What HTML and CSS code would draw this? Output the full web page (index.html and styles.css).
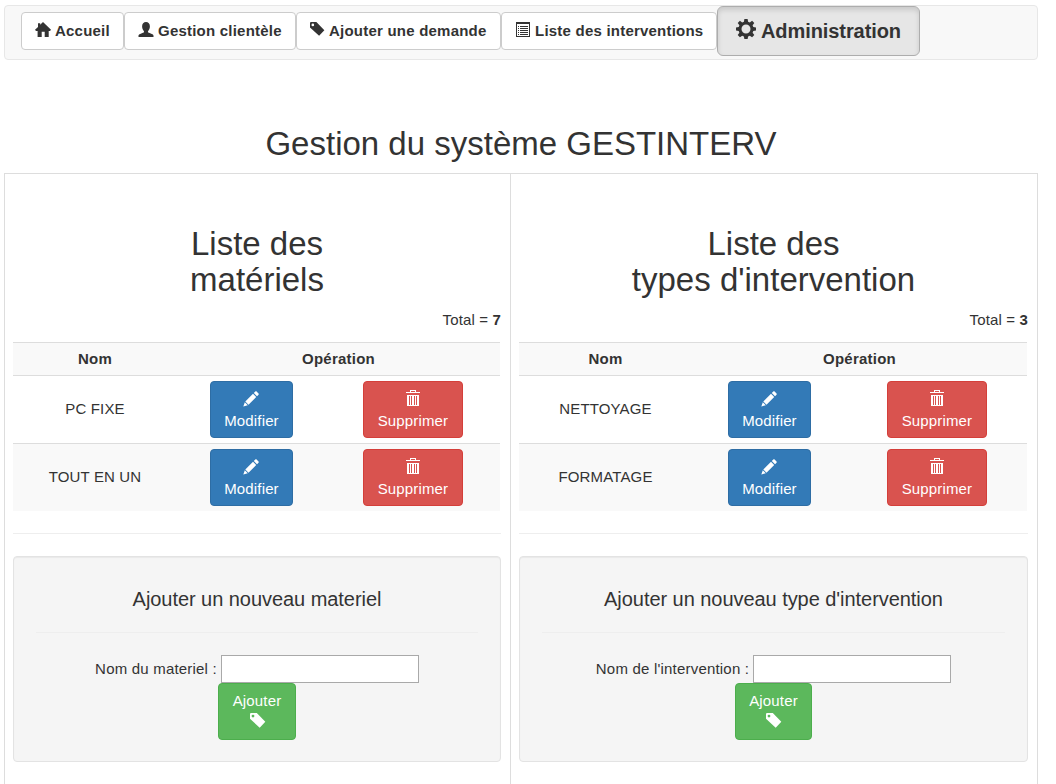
FILE: index.html
```html
<!DOCTYPE html>
<html lang="fr">
<head>
<meta charset="utf-8">
<title>GESTINTERV - Administration</title>
<link rel="stylesheet" href="styles.css">
</head>
<body>
<svg class="sprite" width="0" height="0">
  <symbol id="home" viewBox="0 0 16 16"><path d="M8 0 16 7.800 15 8.900H13.700V15H9.700V9.800H6.700V15H2.600V8.900H1L0 7.800 3 4.900V1.200H5.200V2.700z"/></symbol>
  <symbol id="user" viewBox="0 0 16 16"><path d="M8 0c2.400 0 3.900 1.700 3.900 4.200 0 1.900-.8 3.700-1.700 4.700-.4.500-.3 1.400.3 1.700l3.900 1.700c.8.400 1.100.9 1.100 1.600V15H.5v-1.100c0-.7.3-1.200 1.100-1.600l3.900-1.700c.6-.3.7-1.200.3-1.700-.9-1-1.700-2.800-1.700-4.700C4.100 1.700 5.600 0 8 0z"/></symbol>
  <symbol id="tag" viewBox="0 0 16 16"><path fill-rule="evenodd" d="M.8 0H6.800L15.300 8.800 9.700 14.700 0 5.800V.8zM3 1.700a1.400 1.400 0 1 0 0 2.800 1.400 1.400 0 0 0 0-2.800z"/></symbol>
  <symbol id="list" viewBox="0 0 16 16"><path fill-rule="evenodd" d="M1 0h14v15H1zM2 2v12h12V2z"/><path d="M3 4h1v1H3zM5 4h8v1H5zM3 6h1v1H3zM5 6h8v1H5zM3 8h1v1H3zM5 8h8v1H5zM3 10h1v1H3zM5 10h8v1H5zM3 12h1v1H3zM5 12h8v1H5z"/></symbol>
  <symbol id="cog" viewBox="0 0 20 20"><path fill-rule="evenodd" d="M8.400 0h3.200l.5 2.700 1.700.7L16.100 1.800l2.200 2.200-1.700 2.300.7 1.700 2.700.5v3l-2.700.6-.7 1.700 1.700 2.300-2.200 2.200-2.300-1.600-1.700.7-.5 2.700H8.400l-.5-2.700-1.700-.7-2.300 1.600-2.200-2.200 1.700-2.300-.7-1.700L0 11.500v-3L2.700 8l.7-1.700L1.700 4l2.200-2.200 2.300 1.600 1.700-.7zM10 5.500a4.500 4.500 0 1 0 0 9 4.500 4.500 0 0 0 0-9z"/></symbol>
  <symbol id="pencil" viewBox="0 0 16 16"><path d="M12.300.5c.4-.4.9-.4 1.300 0l1.900 1.900c.4.400.4.900 0 1.300L14 5.200 10.800 2zM10 2.800 13.200 6l-7.700 7.700-3.200-3.200zM1.800 11.200l3 3L.3 15.500z"/></symbol>
  <symbol id="trash" viewBox="0 0 14 17"><path fill-rule="evenodd" d="M4 0h6v2h4v1H0V2h4zM5 1v1h4V1zM1 5h12v11H1z"/><path class="slats" d="M3 6h1v9H3zM5 6h1v9H5zM8 6h1v9H8zM10 6h1v9h-1z"/></symbol>
</svg>

<nav class="navbar">
  <a class="nav-btn nav-home"><svg class="icon"><use href="#home"/></svg><span>Accueil</span></a>
  <a class="nav-btn nav-clients"><svg class="icon"><use href="#user"/></svg><span>Gestion clientèle</span></a>
  <a class="nav-btn nav-add"><svg class="icon"><use href="#tag"/></svg><span>Ajouter une demande</span></a>
  <a class="nav-btn nav-list"><svg class="icon"><use href="#list"/></svg><span>Liste des interventions</span></a>
  <a class="nav-btn nav-admin"><svg class="icon"><use href="#cog"/></svg><span>Administration</span></a>
</nav>

<h1 class="page-title">Gestion du système GESTINTERV</h1>

<main class="panels">
  <section class="panel materials">
    <h2>Liste des<br>matériels</h2>
    <p class="total">Total = <b>7</b></p>
    <table>
      <colgroup><col class="c-name"><col class="c-edit"><col class="c-del"></colgroup>
      <tr class="head"><th>Nom</th><th colspan="2">Opération</th></tr>
      <tr><td>PC FIXE</td>
        <td><a class="btn blue"><svg class="icon"><use href="#pencil"/></svg><span>Modifier</span></a></td>
        <td><a class="btn red"><svg class="icon trash"><use href="#trash"/></svg><span>Supprimer</span></a></td></tr>
      <tr class="odd"><td>TOUT EN UN</td>
        <td><a class="btn blue"><svg class="icon"><use href="#pencil"/></svg><span>Modifier</span></a></td>
        <td><a class="btn red"><svg class="icon trash"><use href="#trash"/></svg><span>Supprimer</span></a></td></tr>
    </table>
    <hr>
    <form class="well">
      <h3>Ajouter un nouveau materiel</h3>
      <hr>
      <div class="field"><label for="mat">Nom du materiel :</label><input id="mat" type="text"></div>
      <a class="btn green"><span>Ajouter</span><svg class="icon"><use href="#tag"/></svg></a>
    </form>
  </section>
  <section class="panel types">
    <h2>Liste des<br>types d'intervention</h2>
    <p class="total">Total = <b>3</b></p>
    <table>
      <colgroup><col class="c-name"><col class="c-edit"><col class="c-del"></colgroup>
      <tr class="head"><th>Nom</th><th colspan="2">Opération</th></tr>
      <tr><td>NETTOYAGE</td>
        <td><a class="btn blue"><svg class="icon"><use href="#pencil"/></svg><span>Modifier</span></a></td>
        <td><a class="btn red"><svg class="icon trash"><use href="#trash"/></svg><span>Supprimer</span></a></td></tr>
      <tr class="odd"><td>FORMATAGE</td>
        <td><a class="btn blue"><svg class="icon"><use href="#pencil"/></svg><span>Modifier</span></a></td>
        <td><a class="btn red"><svg class="icon trash"><use href="#trash"/></svg><span>Supprimer</span></a></td></tr>
    </table>
    <hr>
    <form class="well">
      <h3>Ajouter un nouveau type d'intervention</h3>
      <hr>
      <div class="field"><label for="typ">Nom de l'intervention :</label><input id="typ" type="text"></div>
      <a class="btn green"><span>Ajouter</span><svg class="icon"><use href="#tag"/></svg></a>
    </form>
  </section>
</main>
</body>
</html>
```
FILE: styles.css
```css
* { box-sizing: border-box; }
body {
  margin: 0;
  padding: 5px 0 0 4px;
  width: 1038px;
  height: 784px;
  overflow: hidden;
  background: #fff;
  color: #333;
  font: 15px/21px "Liberation Sans", Arial, sans-serif;
  letter-spacing: .15px;
}
.sprite { display: block; position: absolute; }
.icon { width: 16px; height: 16px; fill: currentColor; flex: none; }
.slats { fill: #d9534f; }
h1, h2, h3, p { margin: 0; font-weight: 400; letter-spacing: 0; }
hr { height: 1px; margin: 0; border: 0; background: #eee; }

.navbar {
  display: flex;
  align-items: flex-start;
  height: 55px;
  padding-left: 16px;
  border: 1px solid #e7e7e7;
  border-radius: 4px;
  background: #f8f8f8;
}
.nav-btn {
  display: flex;
  align-items: flex-start;
  gap: 4px;
  height: 38px;
  margin-top: 6px;
  padding: 7px 0 0 13px;
  border: 1px solid #ccc;
  border-radius: 4px;
  background: #fff;
  font-weight: 700;
  letter-spacing: .22px;
  white-space: nowrap;
}
.nav-btn .icon { margin-top: 2px; }
.nav-home { width: 103px; }
.nav-clients { width: 172px; }
.nav-add { width: 205px; }
.nav-add .icon { width: 15px; height: 15px; }
.nav-list { width: 216px; }
.nav-admin {
  gap: 5px;
  width: 203px;
  height: 50px;
  margin-top: 0;
  padding: 12px 0 0 18px;
  border-color: #adadad;
  border-radius: 6px;
  background: #e6e6e6;
  box-shadow: inset 0 3px 5px rgba(0, 0, 0, .125);
  font-size: 20px;
  line-height: 24px;
  letter-spacing: -.08px;
}
.nav-admin .icon { width: 20px; height: 20px; margin-top: 0; }

.page-title {
  height: 47px;
  margin-top: 66px;
  font-size: 33px;
  line-height: 36px;
  text-align: center;
}
.panels {
  display: grid;
  grid-template-columns: 506px 526px;
  height: 640px;
  border: 1px solid #ddd;
}
.panel { padding: 52px 9px 0 8px; }
.materials { border-right: 1px solid #ddd; }
.panel h2 { font-size: 33px; line-height: 36px; text-align: center; }
.total { height: 44px; padding-top: 11px; text-align: right; letter-spacing: .15px; }
table {
  width: 487px;
  border-collapse: separate;
  border-spacing: 0;
  table-layout: fixed;
  text-align: center;
}
.types table { width: 508px; }
.c-name { width: 164px; }
.c-edit { width: 149px; }
.types .c-name { width: 173px; }
.types .c-edit { width: 155px; }
th, td { height: 68px; padding: 0 0 2px; border-top: 1px solid #ddd; vertical-align: middle; }
td:not(:first-child) { padding: 0; }
.head th { height: 33px; letter-spacing: .22px; }
.head, .odd { background: #f9f9f9; }
td .btn { margin: 0 auto; }

.btn {
  display: flex;
  flex-direction: column;
  align-items: center;
  height: 57px;
  border: 1px solid;
  border-radius: 4px;
}
.btn span, .btn .icon { color: #fff; }
.blue { width: 83px; background: #337ab7; border-color: #2e6da4; }
.red { width: 100px; background: #d9534f; border-color: #d43f3a; }
.green { width: 78px; background: #5cb85c; border-color: #4cae4c; padding-top: 6px; }
.blue .icon { margin: 9px 1px 3px 0; }
.red .icon { width: 14px; height: 17px; margin: 8px 0 3px; }
.green .icon { margin: 2px 0 0 1px; }
.types .green { width: 77px; }

.panel > hr { margin-top: 22px; }
.well {
  display: flex;
  flex-direction: column;
  align-items: center;
  height: 206px;
  margin-top: 22px;
  padding: 31px 22px 0;
  border: 1px solid #e3e3e3;
  border-radius: 4px;
  background: #f5f5f5;
  box-shadow: inset 0 1px 1px rgba(0, 0, 0, .05);
}
.well h3 { font-size: 20px; line-height: 22px; letter-spacing: -.05px; }
.well hr { width: 100%; margin: 22px 0; }
.field { display: flex; align-items: center; gap: 4px; letter-spacing: .2px; }
.field label { padding-bottom: 2px; }
.field input {
  width: 198px;
  height: 28px;
  padding: 1px 2px;
  border: 1px solid #a9a9a9;
  background: #fff;
}
```
